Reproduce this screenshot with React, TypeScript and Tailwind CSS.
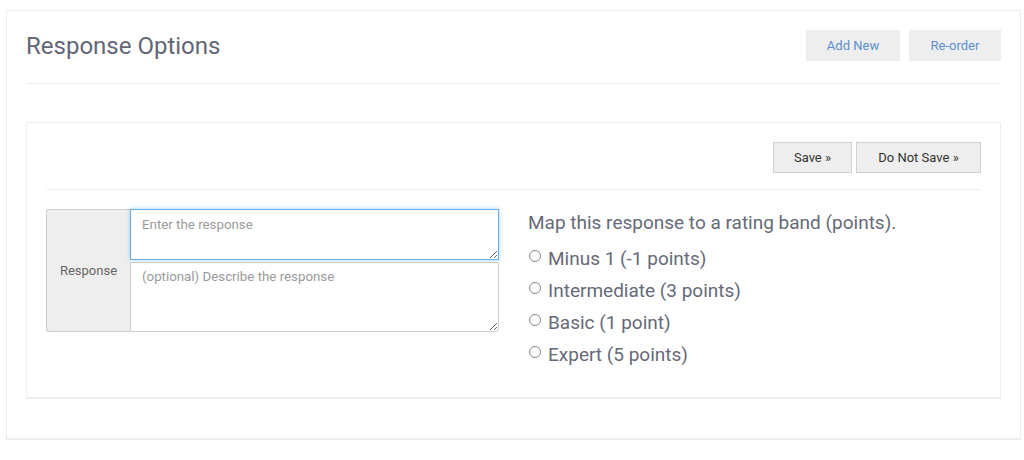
import React from "react";

const font = { fontFamily: "Roboto, 'Liberation Sans', sans-serif" };

function Radio({ label }: { label: string }) {
  return (
    <label className="flex items-start h-[32px] text-[19px] text-[#666a78] leading-[32px]">
      <span className="mt-[7px] ml-[1px] mr-[7px] w-[12px] h-[12px] rounded-full border border-[#8a8a8a] bg-white shrink-0" />
      <span className="leading-[32px]">{label}</span>
    </label>
  );
}

export default function App() {
  return (
    <div className="w-[1024px] h-[460px] bg-white pt-[10px] pl-[6px]" style={font}>
      <div className="w-[1015px] h-[430px] border border-[#eeeeee] border-b-[2px] bg-white px-[19px] pt-[19px]">
        <div className="flex items-center justify-between h-[31px]">
          <h1 className="text-[24px] text-[#636677] leading-none">Response Options</h1>
          <div className="flex gap-[9px]">
            <button className="w-[94px] h-[31px] bg-[#eeeeee] text-[13px] text-[#5b8fd1]">Add New</button>
            <button className="w-[92px] h-[31px] bg-[#eeeeee] text-[13px] text-[#5b8fd1]">Re-order</button>
          </div>
        </div>
        <div className="mt-[22px] border-t border-[#eeeeee]" />
        <div className="mt-[38px] h-[277px] border border-[#eeeeee] border-b-[2px] px-[19px] pt-[19px]">
          <div className="flex justify-end gap-[4px]">
            <button className="w-[79px] h-[31px] bg-[#eeeeee] border border-[#d0d0d0] text-[13px] text-[#333]">Save »</button>
            <button className="w-[125px] h-[31px] bg-[#eeeeee] border border-[#d0d0d0] text-[13px] text-[#333]">Do Not Save »</button>
          </div>
          <div className="mt-[16px] border-t border-[#eeeeee]" />
          <div className="mt-[19px] flex">
            <div className="flex w-[453px] h-[123px]">
              <div className="w-[84px] bg-[#eeeeee] border border-[#cccccc] border-r-0 rounded-l-[3px] flex items-center justify-center text-[13px] text-[#666]">
                Response
              </div>
              <div className="flex-1 flex flex-col gap-[2px]">
                <textarea
                  placeholder="Enter the response"
                  className="h-[51px] w-full border border-[#66afe9] shadow-[0_0_4px_rgba(102,175,233,0.6)] px-[11px] pt-[5px] text-[13.3px] text-[#333] placeholder:text-[#9a9a9a] outline-none resize-y"
                  style={font}
                />
                <textarea
                  placeholder="(optional) Describe the response"
                  className="h-[70px] w-full border border-[#cccccc] rounded-br-[3px] px-[11px] pt-[4px] text-[13.3px] text-[#333] placeholder:text-[#9a9a9a] outline-none resize-y"
                  style={font}
                />
              </div>
            </div>
            <div className="ml-[29px]">
              <p className="text-[19px] text-[#666a78] leading-[28px] mb-[6px]">Map this response to a rating band (points).</p>
              <Radio label="Minus 1 (-1 points)" />
              <Radio label="Intermediate (3 points)" />
              <Radio label="Basic (1 point)" />
              <Radio label="Expert (5 points)" />
            </div>
          </div>
        </div>
      </div>
    </div>
  );
}
